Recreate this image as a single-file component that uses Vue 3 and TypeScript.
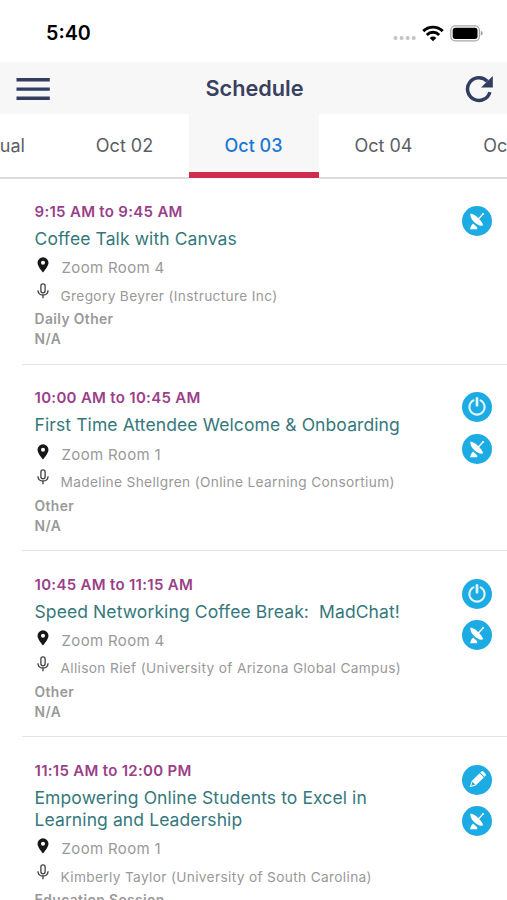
<script setup lang="ts">
type Action = 'power' | 'dish' | 'pencil'

interface Session {
  time: string
  title: string
  room: string
  speaker: string
  kind: string
  note: string
  actions: Action[]
}

const days: string[] = ['Virtual', 'Oct 02', 'Oct 03', 'Oct 04', 'Oct 05']
const selected = 'Oct 03'

const sessions: Session[] = [
  {
    time: '9:15 AM to 9:45 AM',
    title: 'Coffee Talk with Canvas',
    room: 'Zoom Room 4',
    speaker: 'Gregory Beyrer (Instructure Inc)',
    kind: 'Daily Other',
    note: 'N/A',
    actions: ['dish'],
  },
  {
    time: '10:00 AM to 10:45 AM',
    title: 'First Time Attendee Welcome & Onboarding',
    room: 'Zoom Room 1',
    speaker: 'Madeline Shellgren (Online Learning Consortium)',
    kind: 'Other',
    note: 'N/A',
    actions: ['power', 'dish'],
  },
  {
    time: '10:45 AM to 11:15 AM',
    title: 'Speed Networking Coffee Break:  MadChat!',
    room: 'Zoom Room 4',
    speaker: 'Allison Rief (University of Arizona Global Campus)',
    kind: 'Other',
    note: 'N/A',
    actions: ['power', 'dish'],
  },
  {
    time: '11:15 AM to 12:00 PM',
    title: 'Empowering Online Students to Excel in\nLearning and Leadership',
    room: 'Zoom Room 1',
    speaker: 'Kimberly Taylor (University of South Carolina)',
    kind: 'Education Session',
    note: 'N/A',
    actions: ['pencil', 'dish'],
  },
]
</script>

<template>
  <div class="screen">
    <div class="status">
      <span class="clock">5:40</span>
      <div class="indicators">
        <svg class="signal" width="24" height="6" viewBox="0 0 24 6" fill="#c4c4c4">
          <circle cx="2.5" cy="3" r="2" /><circle cx="8.6" cy="3" r="2" />
          <circle cx="14.7" cy="3" r="2" /><circle cx="20.8" cy="3" r="2" />
        </svg>
        <svg class="wifi" width="22" height="17" viewBox="0 0 22 17" fill="none" stroke="#000" stroke-width="2.9">
          <path d="M1.3 6.1a13.8 13.8 0 0 1 19.4 0" />
          <path d="M4.8 9.9a8.7 8.7 0 0 1 12.4 0" />
          <path d="M11 16.2 7.7 12.9a4.7 4.7 0 0 1 6.6 0Z" fill="#000" stroke="none" />
        </svg>
        <svg class="battery" width="33" height="17" viewBox="0 0 33 17">
          <rect x=".8" y=".8" width="28.6" height="15" rx="4.4" fill="#fff" stroke="#a8a8a8" stroke-width="1.3" />
          <rect x="2.7" y="2.7" width="24.8" height="11.2" rx="2.6" fill="#000" />
          <path d="M30.8 5.8q1.8.8 1.8 2.5t-1.8 2.5Z" fill="#999" />
        </svg>
      </div>
    </div>

    <header class="bar">
      <button class="menu" aria-label="Menu">
        <svg width="34" height="24" viewBox="0 0 34 24" stroke="#323e60" stroke-width="3.4">
          <path d="M.5 2.8H33.8M.5 12.1H33.8M.5 21.3H33.8" />
        </svg>
      </button>
      <h1>Schedule</h1>
      <button class="reload" aria-label="Reload">
        <svg width="28" height="28" viewBox="0 0 28 28">
          <path d="M24.9 17.1A11.4 11.4 0 1 1 22.3 6.3" fill="none" stroke="#323e60" stroke-width="3.5" />
          <path d="M27.8 1v11.4H16Z" fill="#323e60" />
        </svg>
      </button>
    </header>

    <nav class="days">
      <div v-for="day in days" :key="day" class="day" :class="{ active: day === selected }">{{ day }}</div>
    </nav>

    <main class="list">
      <article v-for="s in sessions" :key="s.time" class="session">
        <div class="details">
          <div class="time">{{ s.time }}</div>
          <h2 class="title">{{ s.title }}</h2>
          <div class="row room">
            <svg width="12" height="16" viewBox="0 0 12 16">
              <path d="M6 .3A5.5 5.5 0 0 0 .5 5.8C.5 9.4 6 15.5 6 15.5s5.5-6.1 5.5-9.7A5.5 5.5 0 0 0 6 .3Zm0 7.4a2 2 0 1 1 0-4 2 2 0 0 1 0 4Z" fill="#171717" />
            </svg>
            <span>{{ s.room }}</span>
          </div>
          <div class="row speaker">
            <svg width="12" height="16" viewBox="0 0 12 16" fill="none" stroke="#414141" stroke-width="1.3">
              <rect x="3.9" y=".8" width="4.2" height="9" rx="2.1" />
              <path d="M.9 7.2c.2 3 2.2 4.8 5.1 4.8s4.9-1.8 5.1-4.8M6 12v3.2" />
            </svg>
            <span>{{ s.speaker }}</span>
          </div>
          <div class="meta">{{ s.kind }}</div>
          <div class="meta">{{ s.note }}</div>
        </div>
        <div class="actions">
          <button v-for="a in s.actions" :key="a" class="action" :aria-label="a">
            <svg v-if="a === 'power'" width="30" height="30" viewBox="0 0 30 30" fill="none" stroke="#dff6fc" stroke-width="2.1" stroke-linecap="round">
              <path d="M11.4 8.3a7.6 7.6 0 1 0 7.2 0" />
              <path d="M15 6.3v7" stroke-width="2.7" />
            </svg>
            <svg v-else-if="a === 'dish'" width="30" height="30" viewBox="0 0 30 30" fill="#fff">
              <path d="M8.6 7.6C7.6 9.6 9.6 13.8 12.6 16.5s6.4 3.9 8.6 2.7c-.5-2-2.7-5-5.2-7.4S10.2 7.9 8.6 7.6Z" />
              <path d="m15.5 14 5.5-6" stroke="#fff" stroke-width="1.3" />
              <circle cx="21" cy="8" r="1.1" />
              <path d="m11 17.6 4.2 3.6v2.1H8q.3-3 3-5.7Z" />
            </svg>
            <svg v-else width="30" height="30" viewBox="0 0 30 30">
              <g transform="rotate(45 15 15)" fill="#fff">
                <path d="M12 5.900q0-1.400 1.400-1.400h3.200q1.400 0 1.400 1.400v1.500h-6Z" />
                <path d="M12 8.300h6V19.500h-6Z" />
                <path d="m12.500 19.500 2.500 4.700 2.500-4.700" fill="none" stroke="#fff" stroke-width="1" />
              </g>
            </svg>
          </button>
        </div>
      </article>
    </main>
  </div>
</template>

<style>
body {
  background: #fff;
  overflow: hidden;
}
</style>

<style scoped>
.screen {
  width: 507px;
  height: 900px;
  overflow: hidden;
  display: flex;
  flex-direction: column;
  background: #fff;
  font-family: Inter, 'Liberation Sans', sans-serif;
}
button {
  border: 0;
  padding: 0;
  background: none;
}
svg {
  display: block;
  flex: none;
}
.status {
  flex: none;
  height: 62px;
  box-sizing: border-box;
  padding: 4px 24px 0 46px;
  display: flex;
  align-items: center;
  justify-content: space-between;
}
.clock {
  font-size: 19.7px;
  font-weight: 600;
  color: #000;
}
.indicators {
  display: flex;
  align-items: center;
}
.signal {
  margin: 10px 5.5px 0 0;
}
.wifi {
  margin-right: 6px;
}
.bar {
  flex: none;
  height: 52px;
  box-sizing: border-box;
  padding: 1px 14px 0 16px;
  display: grid;
  grid-template-columns: 34px 1fr 34px;
  align-items: center;
  background: #f7f7f7;
}
.menu {
  padding-top: 1px;
}
.bar h1 {
  margin: 0 0 1px;
  text-align: center;
  font-size: 21.7px;
  line-height: 28px;
  font-weight: 600;
  color: #3a4060;
}
.reload {
  justify-self: end;
}
.days {
  flex: none;
  height: 64px;
  display: grid;
  grid-template-columns: repeat(5, 130px);
  justify-content: center;
}
.day {
  box-sizing: border-box;
  height: 65px;
  border-bottom: 2px solid #dcdcdc;
  text-align: center;
  font-size: 18px;
  line-height: 63px;
  color: #5b5e66;
}
.day:first-child {
  padding-left: 8px;
}
.day:nth-child(2) {
  padding-left: 2px;
}
.day:last-child {
  padding-right: 3px;
}
.day.active {
  height: 64px;
  background: #f7f7f7;
  border-bottom: 6px solid #cf2d4b;
  font-weight: 500;
  color: #1b78d6;
}
.list {
  display: flex;
  flex-direction: column;
  padding-top: 0.4px;
}
.session {
  flex: none;
  box-sizing: border-box;
  margin-left: 22px;
  padding: 22.4px 15px 14.5px 12.5px;
  display: flex;
  justify-content: space-between;
  border-bottom: 1px solid #e4e4e4;
}
.time {
  font-size: 15px;
  line-height: 22px;
  font-weight: 600;
  letter-spacing: 0.3px;
  color: #9a3f88;
}
.title {
  margin: 5.3px 0 7.2px;
  font-size: 17.5px;
  line-height: 22px;
  font-weight: 400;
  letter-spacing: 0.1px;
  white-space: pre;
  color: #35787c;
}
.row {
  display: flex;
  height: 22px;
  padding-left: 2.5px;
  line-height: 22px;
  white-space: nowrap;
  color: #999;
}
.room {
  gap: 12.5px;
  font-size: 15px;
  letter-spacing: 0.35px;
}
.speaker {
  margin: 5.3px 0 2.7px;
  gap: 11.5px;
  font-size: 13.7px;
  letter-spacing: 0.34px;
}
.speaker svg {
  margin-top: -1.5px;
}
.meta {
  font-size: 13.8px;
  line-height: 20px;
  font-weight: 600;
  letter-spacing: 0.42px;
  color: #999;
}
.actions {
  display: flex;
  flex-direction: column;
  gap: 11.5px;
  padding-top: 5px;
}
.action {
  width: 30px;
  height: 30px;
  display: flex;
  justify-content: center;
}
.action svg {
  border-radius: 50%;
  background: #1cabe2;
}
</style>
